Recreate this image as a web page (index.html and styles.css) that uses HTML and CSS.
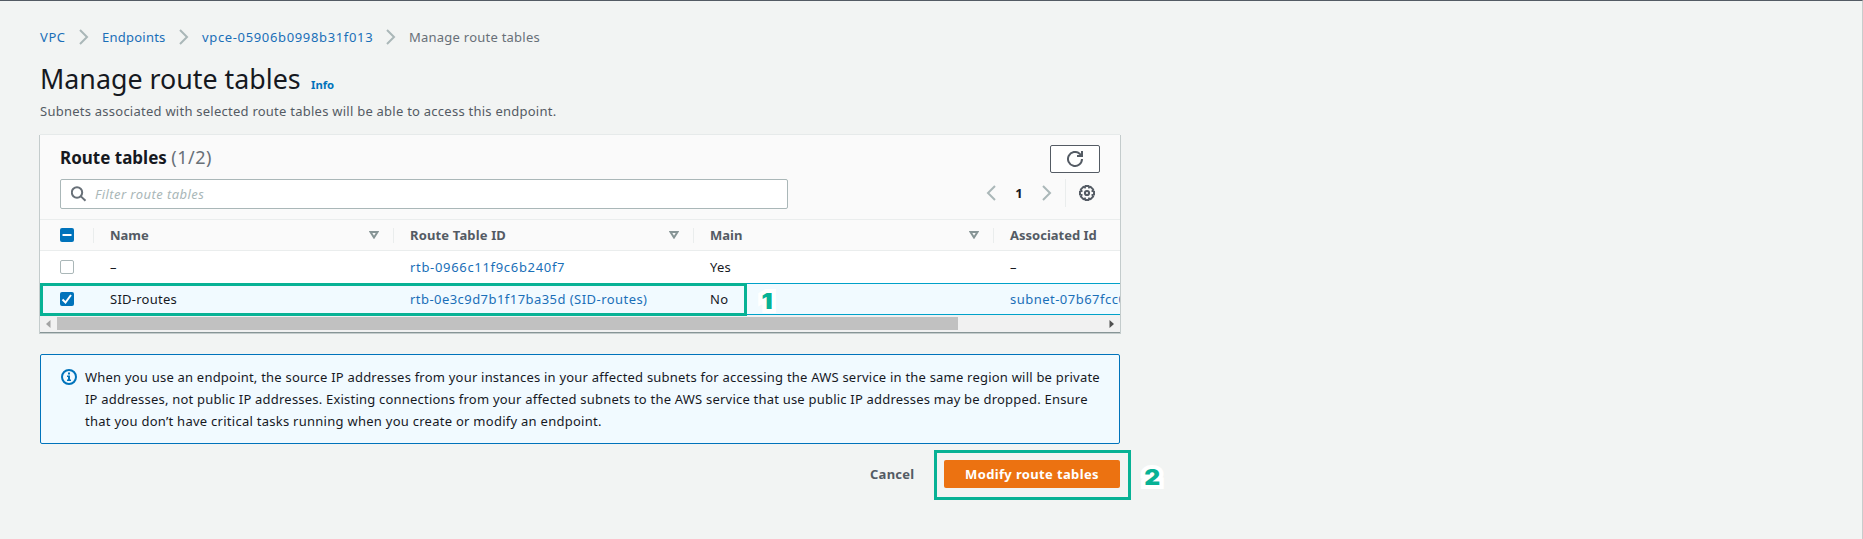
FILE: index.html
```html
<!DOCTYPE html>
<html lang="en">
<head>
<meta charset="utf-8">
<title>Manage route tables</title>
<link rel="stylesheet" href="styles.css">
</head>
<body>
<main class="page">
  <nav class="crumbs">
    <a class="c1">VPC</a>
    <svg class="chev" viewBox="0 0 10 16"><path d="M1 1l7 7-7 7"/></svg>
    <a class="c2">Endpoints</a>
    <svg class="chev" viewBox="0 0 10 16"><path d="M1 1l7 7-7 7"/></svg>
    <a class="c3">vpce-05906b0998b31f013</a>
    <svg class="chev" viewBox="0 0 10 16"><path d="M1 1l7 7-7 7"/></svg>
    <span class="c4">Manage route tables</span>
  </nav>
  <header class="heading"><h1>Manage route tables</h1><a class="info">Info</a></header>
  <p class="sub">Subnets associated with selected route tables will be able to access this endpoint.</p>

  <section class="panel">
    <div class="panel-top">
      <h2>Route tables <span>(1/2)</span></h2>
      <button class="refresh"><svg width="16" height="16" viewBox="0 0 16 16"><path d="M15 8A7 7 0 1 1 12.600 2.700L14.500 4.800M15 0v5H10"/></svg></button>
    </div>
    <div class="tools">
      <div class="search">
        <svg width="16" height="16" viewBox="0 0 16 16"><circle cx="6" cy="6.500" r="5.200"/><path d="M9.900 10.400l4.600 4.400"/></svg>
        <span>Filter route tables</span>
      </div>
      <div class="pager">
        <svg class="chev" viewBox="0 0 10 16"><path d="M9 1L2 8l7 7"/></svg>
        <b>1</b>
        <svg class="chev" viewBox="0 0 10 16"><path d="M1 1l7 7-7 7"/></svg>
      </div>
      <div class="gear"><svg width="16" height="16" viewBox="0 0 16 16"><path d="M6.500 1h3l.6 1.500 1.500-.6 2.500 2.500-.6 1.500 1.500.6v3l-1.500.6.6 1.500-2.500 2.500-1.500-.6L9.500 15h-3l-.6-1.500-1.500.6-2.500-2.500.6-1.500L1 9.500v-3l1.500-.6-.6-1.500 2.500-2.500 1.500.6z"/><circle cx="8" cy="8" r="2.100"/></svg></div>
    </div>
    <div class="table">
      <div class="row head">
        <div class="check"><i class="box on"><svg viewBox="0 0 14 14"><path d="M2.500 7h9"/></svg></i></div>
        <div class="cell"><span>Name</span><svg class="sort" viewBox="0 0 10 8"><path d="M1.500 1h7L5 6.500z"/></svg></div>
        <div class="cell"><span class="h2c">Route Table ID</span><svg class="sort" viewBox="0 0 10 8"><path d="M1.500 1h7L5 6.500z"/></svg></div>
        <div class="cell"><span>Main</span><svg class="sort" viewBox="0 0 10 8"><path d="M1.500 1h7L5 6.500z"/></svg></div>
        <div class="cell"><span>Associated Id</span></div>
      </div>
      <div class="row first">
        <div class="check"><i class="box"></i></div>
        <div class="cell">–</div>
        <div class="cell"><a class="r1">rtb-0966c11f9c6b240f7</a></div>
        <div class="cell">Yes</div>
        <div class="cell">–</div>
      </div>
      <div class="row selected">
        <div class="check"><i class="box on"><svg viewBox="0 0 14 14"><path d="M2.500 7.500l3 3 5.500-7.500"/></svg></i></div>
        <div class="cell"><span>SID-routes</span></div>
        <div class="cell"><a class="r2">rtb-0e3c9d7b1f17ba35d (SID-routes)</a></div>
        <div class="cell">No</div>
        <div class="cell clip"><a class="r3">subnet-07b67fcc0</a></div>
      </div>
    </div>
    <div class="scroll">
      <svg width="5" height="8" viewBox="0 0 5 8"><path fill="#a3a3a3" d="M4.500 0v8L0 4z"/></svg>
      <div class="track"><div class="thumb"></div></div>
      <svg width="5" height="8" viewBox="0 0 5 8"><path fill="#505050" d="M.5 0v8L5 4z"/></svg>
    </div>
    <div class="mark mark-row"></div>
    <div class="num num-1">1</div>
  </section>

  <section class="alert">
    <svg width="16" height="16" viewBox="0 0 16 16"><circle cx="8" cy="8" r="7"/><path d="M7 3.500h2v2H7zM6 6.500h3v4h1v1.500H6v-1.500h1V8H6z"/></svg>
    <p><span class="a1">When you use an endpoint, the source IP addresses from your instances in your affected subnets for accessing the AWS service in the same region will be private</span><br><span class="a2">IP addresses, not public IP addresses. Existing connections from your affected subnets to the AWS service that use public IP addresses may be dropped. Ensure</span><br><span class="a3">that you don’t have critical tasks running when you create or modify an endpoint.</span></p>
  </section>

  <footer class="actions">
    <button class="cancel">Cancel</button>
    <div class="submit-wrap">
      <button class="submit">Modify route tables</button>
      <div class="mark mark-submit"></div>
      <div class="num num-2">2</div>
    </div>
  </footer>
</main>
</body>
</html>
```
FILE: styles.css
```css
* { box-sizing: border-box; }
body {
  margin: 0;
  height: 539px;
  overflow: hidden;
  background: #f2f4f3;
  border-top: 1px solid #545b64;
  border-right: 1px solid #c8cccc;
  font: 13px/22px "Noto Sans", "Open Sans", sans-serif;
  color: #16191f;
}
h1, h2, p { margin: 0; font-weight: 400; }
a { color: #1a6fb8; }
svg { display: block; flex: none; fill: none; }
button { font: inherit; padding: 0; border: 0; border-radius: 2px; background: none; }
.page { width: 1120px; padding: 25px 0 0 40px; white-space: nowrap; }

.crumbs { display: flex; align-items: center; height: 22px; letter-spacing: .24px; color: #687078; }
.c1 { width: 39px; letter-spacing: .6px; }
.c2 { width: 77px; }
.c3 { width: 184px; letter-spacing: .65px; }
.chev { width: 10px; height: 16px; stroke: #aab7b8; stroke-width: 2; }
.crumbs .chev { margin-right: 13px; }

.heading { display: flex; align-items: baseline; height: 38px; margin-top: 12px; }
h1 { width: 271px; font-size: 26.8px; line-height: 37px; }
.info { font-size: 11.3px; font-weight: 700; color: #0073bb; }
.sub { margin-top: 2px; height: 22px; letter-spacing: .245px; color: #545b64; }

.panel {
  position: relative;
  margin-top: 12px;
  height: 199px;
  background: #fafafa;
  border-top: 1px solid #e6eaea;
  border-bottom: 1px solid #879596;
  box-shadow: -1px 1px 0 #c4cccc, 1px 1px 0 #c4cccc;
}
.panel-top { display: flex; justify-content: space-between; padding: 10px 20px 0; height: 44px; }
h2 { font-size: 17px; font-weight: 700; line-height: 24px; }
h2 span { font-size: 18px; font-weight: 400; letter-spacing: .5px; color: #687078; }
.refresh { display: flex; align-items: center; justify-content: center; width: 50px; height: 28px; border: 1px solid #545b64; background: #fff; }
.refresh svg { stroke: #545b64; stroke-width: 2; }
.tools { display: flex; padding-left: 20px; height: 40px; }
.search { display: flex; align-items: center; width: 728px; height: 30px; padding-left: 10px; border: 1px solid #aab7b8; border-radius: 2px; background: #fff; font-style: italic; letter-spacing: .44px; color: #aab7b8; }
.search svg { margin-right: 8px; stroke: #687078; stroke-width: 2; }
.pager { display: flex; align-items: center; height: 28px; margin-left: 198px; }
.pager b { width: 46px; text-align: center; }
.gear { height: 28px; margin-left: 13px; padding: 6px 0 0 13px; border-left: 1px solid #eaeded; }
.gear svg { stroke: #545b64; stroke-width: 2; }

.table { overflow: hidden; }
.row { display: grid; grid-template-columns: 53px 300px 300px 300px 127px; align-items: center; letter-spacing: .25px; }
.check { padding-left: 20px; }
.box { display: block; width: 14px; height: 14px; border: 1px solid #aab7b8; border-radius: 2px; background: #fff; }
.box.on { border: 0; background: #0073bb; }
.box svg { stroke: #fff; stroke-width: 2; }
.cell { display: flex; align-items: center; justify-content: space-between; height: 22px; padding: 0 14px 0 17px; }
.clip { overflow: hidden; padding-right: 0; }
.head { height: 32px; border-top: 1px solid #eaeded; border-bottom: 1px solid #eaeded; font-weight: 700; letter-spacing: 0; color: #545b64; }
.head .cell { height: 15px; padding-left: 16px; border-left: 1px solid #eaeded; }
.h2c { letter-spacing: .15px; }
.r1 { letter-spacing: .68px; }
.r2 { letter-spacing: .45px; }
.r3 { letter-spacing: .48px; }
.sort { width: 10px; height: 8px; stroke: #879596; stroke-width: 2; }
.first { height: 32px; background: #fff; }
.selected { height: 32px; background: #f1faff; border: solid #00a1c9; border-width: 1px 0; }

.scroll { display: flex; align-items: center; height: 17px; padding: 0 6px; background: #f1f1f1; }
.track { flex: 1; height: 13px; margin: 0 6px; }
.thumb { width: 901px; height: 13px; background: #c1c1c1; }

.mark { position: absolute; border: 3px solid #07b295; }
.mark-row { left: 0; top: 148px; width: 707px; height: 33px; }
.num {
  position: absolute;
  font: 900 22px/22px Inter, "Noto Sans", sans-serif;
  color: #07b295;
  transform: scaleX(1.12);
  -webkit-text-stroke: 8px #fff;
  paint-order: stroke fill;
}
.num-1 { left: 722px; top: 155px; }

.alert { display: flex; margin-top: 21px; height: 90px; padding: 11px 20px 0; border: 1px solid #0073bb; border-radius: 2px; background: #f1faff; }
.alert svg { margin: 3px 8px 0 0; }
.alert circle { stroke: #0073bb; stroke-width: 2; }
.alert path { fill: #0073bb; }
.a1 { letter-spacing: .213px; }
.a2 { letter-spacing: .21px; }
.a3 { letter-spacing: .265px; }

.actions { display: flex; justify-content: flex-end; padding-top: 16px; font-weight: 700; }
.cancel { width: 74px; text-align: left; letter-spacing: .25px; color: #545b64; }
.submit-wrap { position: relative; }
.submit { width: 176px; height: 28px; letter-spacing: .36px; background: #ec7211; color: #fff; }
.mark-submit { left: -10px; top: -10px; width: 197px; height: 50px; }
.num-2 { left: 201px; top: 6px; }
```
